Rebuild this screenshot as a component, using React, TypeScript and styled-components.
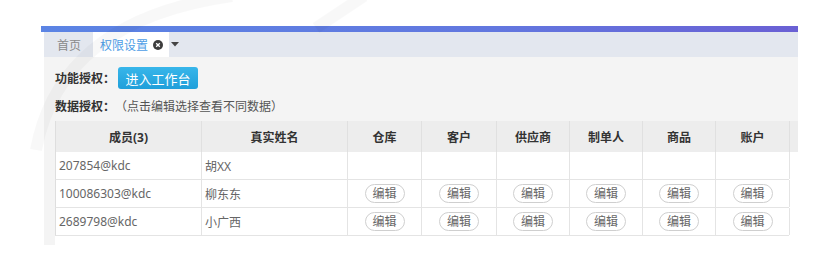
import styled, { createGlobalStyle } from 'styled-components'

const GlobalStyle = createGlobalStyle`
  body {
    margin: 0;
    background: #fff;
    font-family: "Noto Sans", "Noto Sans CJK SC", sans-serif;
    font-size: 12px;
    color: #555;
  }
`

const columns = ['成员(3)', '真实姓名', '仓库', '客户', '供应商', '制单人', '商品', '账户']
const widths = '146px 146px 74px 75px 73px 73px 73px 74px'

const rows = [
  { account: '207854@kdc', name: '胡XX', editable: false },
  { account: '100086303@kdc', name: '柳东东', editable: true },
  { account: '2689798@kdc', name: '小广西', editable: true },
]

function App() {
  return (
    <Page>
      <GlobalStyle />
      <Panel>
        <TopBar />
        <TabBar>
          <Tab>首页</Tab>
          <Tab active>
            权限设置
            <CloseIcon viewBox="0 0 10 10">
              <circle cx="5" cy="5" r="5" fill="#3d3d3d" />
              <path d="M3.2 3.2 L6.8 6.8 M6.8 3.2 L3.2 6.8" stroke="#fff" strokeWidth="1.3" />
            </CloseIcon>
          </Tab>
          <Caret viewBox="0 0 8 5">
            <path d="M0 0 H8 L4 4.5 Z" fill="#444" />
          </Caret>
        </TabBar>
        <Content>
          <Line>
            <Label>功能授权：</Label>
            <PrimaryButton>进入工作台</PrimaryButton>
          </Line>
          <Line tight>
            <Label>数据授权：</Label>
            <Hint>（点击编辑选择查看不同数据）</Hint>
          </Line>
          <TableWrap>
            <HeadRow>
              {columns.map((c) => (
                <HeadCell key={c}>{c}</HeadCell>
              ))}
            </HeadRow>
            {rows.map((r) => (
              <BodyRow key={r.account}>
                <Cell>{r.account}</Cell>
                <Cell>{r.name}</Cell>
                {columns.slice(2).map((c) => (
                  <Cell key={c} center>
                    {r.editable && <EditButton>编辑</EditButton>}
                  </Cell>
                ))}
              </BodyRow>
            ))}
          </TableWrap>
        </Content>
      </Panel>
      <Watermark viewBox="0 0 826 267">
        <path d="M232 -4 Q60 20 36 150" stroke="#000" strokeOpacity="0.028" strokeWidth="12" fill="none" />
        <path d="M364 -4 L316 28" stroke="#000" strokeOpacity="0.028" strokeWidth="12" fill="none" />
      </Watermark>
    </Page>
  )
}

const Page = styled.div`
  position: relative;
  width: 826px;
  height: 267px;
  padding: 26px 28px 0 41px;
  box-sizing: border-box;
`

const Panel = styled.div`
  width: 757px;
`

const TopBar = styled.div`
  height: 6px;
  background: linear-gradient(90deg, #5b84e4 0%, #6277df 60%, #6a60d4 100%);
`

const TabBar = styled.div`
  display: flex;
  align-items: center;
  height: 25px;
  margin-left: 3px;
  background: #e3e7ef;
`

const Tab = styled.div<{ active?: boolean }>`
  display: flex;
  align-items: center;
  gap: 5px;
  height: 100%;
  padding: ${(p) => (p.active ? '0 6px 0 7px' : '0 12px 0 13px')};
  background: ${(p) => (p.active ? '#fff' : 'transparent')};
  color: ${(p) => (p.active ? '#4d9de6' : '#8a8a8a')};
  font-size: 12px;
`

const CloseIcon = styled.svg`
  width: 10px;
  height: 10px;
`

const Caret = styled.svg`
  width: 8px;
  height: 5px;
  margin-left: 2px;
`

const Content = styled.div`
  margin-left: 3px;
  padding: 10px 0 0 11px;
  background: #f4f4f4;
  height: 188px;
  box-sizing: border-box;
`

const Line = styled.div<{ tight?: boolean }>`
  display: flex;
  align-items: center;
  height: ${(p) => (p.tight ? '18px' : '22px')};
  margin-top: ${(p) => (p.tight ? '8px' : '0')};
`

const Label = styled.span`
  font-weight: bold;
  color: #333;
`

const Hint = styled.span`
  color: #555;
`

const PrimaryButton = styled.button`
  width: 80px;
  height: 22px;
  margin-left: 3px;
  padding: 0;
  border: none;
  border-radius: 3px;
  background: linear-gradient(#38b6ea, #1f9fda);
  color: #fff;
  font-family: inherit;
  font-size: 13px;
`

const TableWrap = styled.div`
  margin-top: 6px;
  background: #fff;
  height: 124px;
`

const HeadRow = styled.div`
  display: grid;
  grid-template-columns: ${widths} 9px;
  height: 31px;
  background: #ededed;
  border-left: 1px solid #dedede;
  & > div:nth-child(8) {
    border-right: 1px solid #e0e0e0;
  }
`

const HeadCell = styled.div`
  display: flex;
  align-items: center;
  justify-content: center;
  border-right: 1px solid #e0e0e0;
  font-weight: bold;
  color: #333;
`

const BodyRow = styled.div`
  display: grid;
  grid-template-columns: ${widths};
  width: 734px;
  height: 28px;
  box-sizing: border-box;
  border-left: 1px solid #dedede;
  border-bottom: 1px solid #e4e4e4;
`

const Cell = styled.div<{ center?: boolean }>`
  display: flex;
  align-items: center;
  justify-content: ${(p) => (p.center ? 'center' : 'flex-start')};
  padding-left: ${(p) => (p.center ? '0' : '3px')};
  border-right: 1px solid #e4e4e4;
  color: #666;
  font-size: 12px;
`

const EditButton = styled.button`
  width: 40px;
  height: 19px;
  padding: 0;
  border: 1px solid #cfcfcf;
  border-radius: 10px;
  background: #fff;
  color: #666;
  font-family: inherit;
  font-size: 12px;
  line-height: 17px;
`

const Watermark = styled.svg`
  position: absolute;
  inset: 0;
  width: 826px;
  height: 267px;
  pointer-events: none;
`

export default App
